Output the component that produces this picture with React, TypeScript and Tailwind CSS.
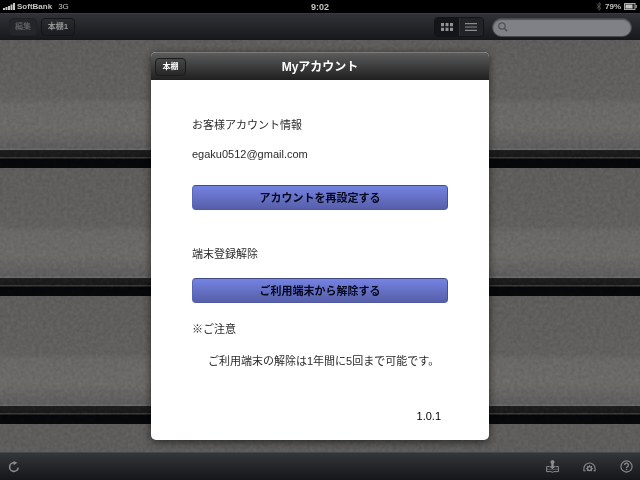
import type { ReactNode } from "react";

function StatusBar() {
  return (
    <div className="flex h-[13px] items-center justify-between bg-black pr-[3px] pl-[3px] text-[8px] leading-3 text-[#c4c4c4]">
      <div className="flex flex-1 items-center">
        <svg width="12" height="7" viewBox="0 0 12 7" fill="#c8c8c8" aria-hidden="true">
          <rect x="0" y="5" width="2" height="2" />
          <rect x="2.5" y="4" width="2" height="3" />
          <rect x="5" y="3" width="2" height="4" />
          <rect x="7.5" y="1.5" width="2" height="5.5" />
          <rect x="10" y="0" width="2" height="7" />
        </svg>
        <span className="ml-0.5 font-bold">SoftBank</span>
        <span className="ml-1.5">3G</span>
      </div>
      <span className="text-[9px] font-bold">9:02</span>
      <div className="flex flex-1 items-center justify-end gap-[3px]">
        <svg width="6" height="9" viewBox="0 0 6 9" fill="none" stroke="#5c5c5c" strokeWidth="0.9" aria-hidden="true">
          <path d="M0.7 2.4 5 6.4 3 8.3V0.7L5 2.5 0.7 6.6" />
        </svg>
        <span className="font-bold">79%</span>
        <svg width="13" height="7" viewBox="0 0 13 7" aria-hidden="true">
          <rect x="0.5" y="0.5" width="10.5" height="6" fill="#222" stroke="#a9a9a9" />
          <rect x="1.5" y="1.5" width="7" height="4" fill="#c4c4c4" />
          <path d="M11.5 2h1.3v3h-1.3z" fill="#a9a9a9" />
        </svg>
      </div>
    </div>
  );
}

function Toolbar() {
  return (
    <header className="flex h-[27px] items-center border-t border-[#393b40] bg-linear-to-b from-[#303237] to-[#17181c] pr-2 pl-[9px]">
      <div className="flex gap-1 text-[8px] leading-3">
        <button
          type="button"
          className="flex h-[18px] w-7 items-center justify-center rounded border border-[#202125] bg-[#25262a] text-[#707174]"
        >
          編集
        </button>
        <button
          type="button"
          className="flex h-[18px] w-[34px] items-center justify-center rounded border border-[#141518] bg-linear-to-b from-[#2b2c30] to-[#1a1b1e] font-bold text-[#949597]"
        >
          本棚1
        </button>
      </div>
      <div className="ml-auto flex h-5 w-[50px] overflow-hidden rounded border border-[#121316]">
        <button type="button" aria-label="グリッド表示" className="flex flex-1 items-center justify-center bg-[#141518]">
          <svg width="12" height="8" viewBox="0 0 12 8" fill="#919294">
            <path d="M0 0h3v3.2H0zM4.5 0h3v3.2h-3zM9 0h3v3.2H9zM0 4.7h3V8H0zM4.5 4.7h3V8h-3zM9 4.7h3V8H9z" />
          </svg>
        </button>
        <button
          type="button"
          aria-label="リスト表示"
          className="flex flex-1 items-center justify-center border-l border-[#303136] bg-[#222327]"
        >
          <svg width="12" height="8" viewBox="0 0 12 8" fill="#8a8b8d">
            <path d="M0 0h12v1.2H0zM0 3.4h12v1.2H0zM0 6.8h12V8H0z" />
          </svg>
        </button>
      </div>
      <label className="ml-2 flex h-[19px] w-[140px] items-center rounded-full border border-[#46484c] bg-[#808186] pr-2 pl-[5px] shadow-[inset_0_1px_1px_#55565a]">
        <svg width="10" height="10" viewBox="0 0 10 10" className="shrink-0" fill="none" stroke="#505156" aria-hidden="true">
          <circle cx="4" cy="4" r="3.2" strokeWidth="1.2" />
          <path d="m6.4 6.4 2.7 2.8" strokeWidth="1.6" />
        </svg>
        <input type="search" aria-label="検索" className="ml-1 w-full min-w-0 bg-transparent text-[10px] outline-none" />
      </label>
    </header>
  );
}

function Shelf() {
  return (
    <>
      <div className="h-[110px] shrink-0 bg-[linear-gradient(to_bottom,#5e5d5c_0,#62605f_58px,#6a6866_64px,#6c6a68_88px,#5e5d5d_108px,#6f6e6d_110px)]" />
      <div className="h-[18px] shrink-0 bg-[linear-gradient(to_bottom,#1f1e1e_0,#191919_7px,#3b3a3a_7px,#3b3a3a_8px,#060709_9px,#07080b_18px)]" />
    </>
  );
}

function Bookshelf() {
  return (
    <main className="relative flex flex-1 flex-col overflow-hidden bg-[#5e5d5c]">
      <Shelf />
      <Shelf />
      <Shelf />
      <div className="min-h-7 flex-1 bg-[#5e5d5c]" />
      {/* grain of the wall paper */}
      <svg className="absolute inset-0 h-full w-full opacity-10 mix-blend-soft-light" aria-hidden="true">
        <filter id="grain" colorInterpolationFilters="sRGB">
          <feTurbulence type="fractalNoise" baseFrequency="0.28" numOctaves="3" seed="4" />
          <feColorMatrix values="1.6 0 0 0 -0.3  1.6 0 0 0 -0.3  1.6 0 0 0 -0.3  0 0 0 0 1" />
        </filter>
        <rect width="100%" height="100%" filter="url(#grain)" />
      </svg>
    </main>
  );
}

function BottomBar() {
  return (
    <footer className="flex h-7 items-center border-t border-[#45474a] bg-linear-to-b from-[#33363a] to-[#15161a] pr-[7px] pl-2 text-[#8b8c90]">
      <button type="button" aria-label="更新">
        <svg width="12" height="12" viewBox="0 0 12 12" fill="none" stroke="currentColor" strokeWidth="1.6">
          <path d="M6.2 1.8A4.3 4.3 0 1 0 10.2 6.6" />
          <path d="M5.6 0v4.3L9.4 1.7z" fill="currentColor" stroke="none" />
        </svg>
      </button>
      <div className="ml-auto flex items-center gap-6">
        <button type="button" aria-label="ストア">
          <svg width="13" height="13" viewBox="0 0 13 13" fill="none" stroke="currentColor">
            <path d="M3.6 6.6H.6v5h4.3l1.6.7 1.6-.7h4.3v-5h-3" />
            <path d="M.6 9.3h4.6l1.3.7 1.3-.7h4.6" strokeWidth="0.5" />
            <path d="M6.5 0a2.1 2.1 0 0 1 1.2 3.8v2.5h2L6.5 9.2 3.3 6.3h2V3.8A2.1 2.1 0 0 1 6.5 0z" fill="currentColor" stroke="none" />
          </svg>
        </button>
        <button type="button" aria-label="設定">
          <svg width="13" height="12" viewBox="0 0 13 12" fill="none" stroke="currentColor">
            <path d="M2.6 9.8H.9V7.6a5.6 5.6 0 0 1 11.2 0v2.2h-1.7" strokeWidth="1.1" />
            <circle cx="6.5" cy="7.6" r="2" strokeWidth="1.3" />
            <path d="M6.5 4.2v1.4M3.9 5l1.2 1.2M9.1 5 7.9 6.2M3 7.6h1.5M10 7.6H8.5M4 10.1 5.1 9M9 10.1 7.9 9" />
          </svg>
        </button>
        <button type="button" aria-label="ヘルプ">
          <svg width="13" height="13" viewBox="0 0 13 13" fill="none" stroke="currentColor">
            <circle cx="6.5" cy="6.5" r="5.6" strokeWidth="1.1" />
            <path d="M4.6 5.1a1.9 1.9 0 1 1 2.7 1.7q-.8.4-.8 1.2" strokeWidth="1.3" />
            <circle cx="6.5" cy="9.5" r="0.8" fill="currentColor" stroke="none" />
          </svg>
        </button>
      </div>
    </footer>
  );
}

function ActionButton({ children }: { children: ReactNode }) {
  return (
    <button
      type="button"
      className="flex h-[25px] w-full items-center justify-center rounded border border-t-[#424a84] border-r-[#474f8c] border-b-[#5159a0] border-l-[#5b65b5] bg-linear-to-b from-[#7583e2] to-[#565fa9] text-[11px] leading-4 font-bold text-[#05071c]"
    >
      {children}
    </button>
  );
}

function AccountDialog() {
  return (
    <section
      role="dialog"
      aria-labelledby="account-title"
      className="w-[338px] overflow-hidden rounded-[5px] bg-white shadow-[0_2px_8px_rgba(0,0,0,0.6)]"
    >
      <header className="grid h-7 grid-cols-[1fr_auto_1fr] items-center border-t border-[#7c7c7c] bg-linear-to-b from-[#5c5c5c] to-[#202020] px-1">
        <button
          type="button"
          className="flex h-[18px] w-[31px] items-center justify-center rounded border border-[#1b1b1b] bg-linear-to-b from-[#474747] to-[#272727] text-[8px] leading-3 font-bold text-white"
        >
          本棚
        </button>
        <h1 id="account-title" className="text-[12px] leading-4 font-bold text-white">
          Myアカウント
        </h1>
      </header>
      <div className="px-[41px] pt-[37px] pb-4 text-[11px] leading-4 text-[#2b2b2b]">
        <h2>お客様アカウント情報</h2>
        <p className="mt-[13px] mb-[23px]">egaku0512@gmail.com</p>
        <ActionButton>アカウントを再設定する</ActionButton>
        <h2 className="mt-9 mb-4">端末登録解除</h2>
        <ActionButton>ご利用端末から解除する</ActionButton>
        <p className="mt-[18px]">※ご注意</p>
        <p className="mt-4 pl-4 whitespace-nowrap">ご利用端末の解除は1年間に5回まで可能です。</p>
        <p className="mt-[39px] pr-[7px] text-right text-black">1.0.1</p>
      </div>
    </section>
  );
}

export default function App() {
  return (
    <div className="relative flex min-h-screen flex-col bg-black font-['Liberation_Sans','Noto_Sans_CJK_JP',sans-serif]">
      <StatusBar />
      <Toolbar />
      <Bookshelf />
      <BottomBar />
      <div className="absolute inset-x-0 top-[52px] flex justify-center">
        <AccountDialog />
      </div>
    </div>
  );
}
